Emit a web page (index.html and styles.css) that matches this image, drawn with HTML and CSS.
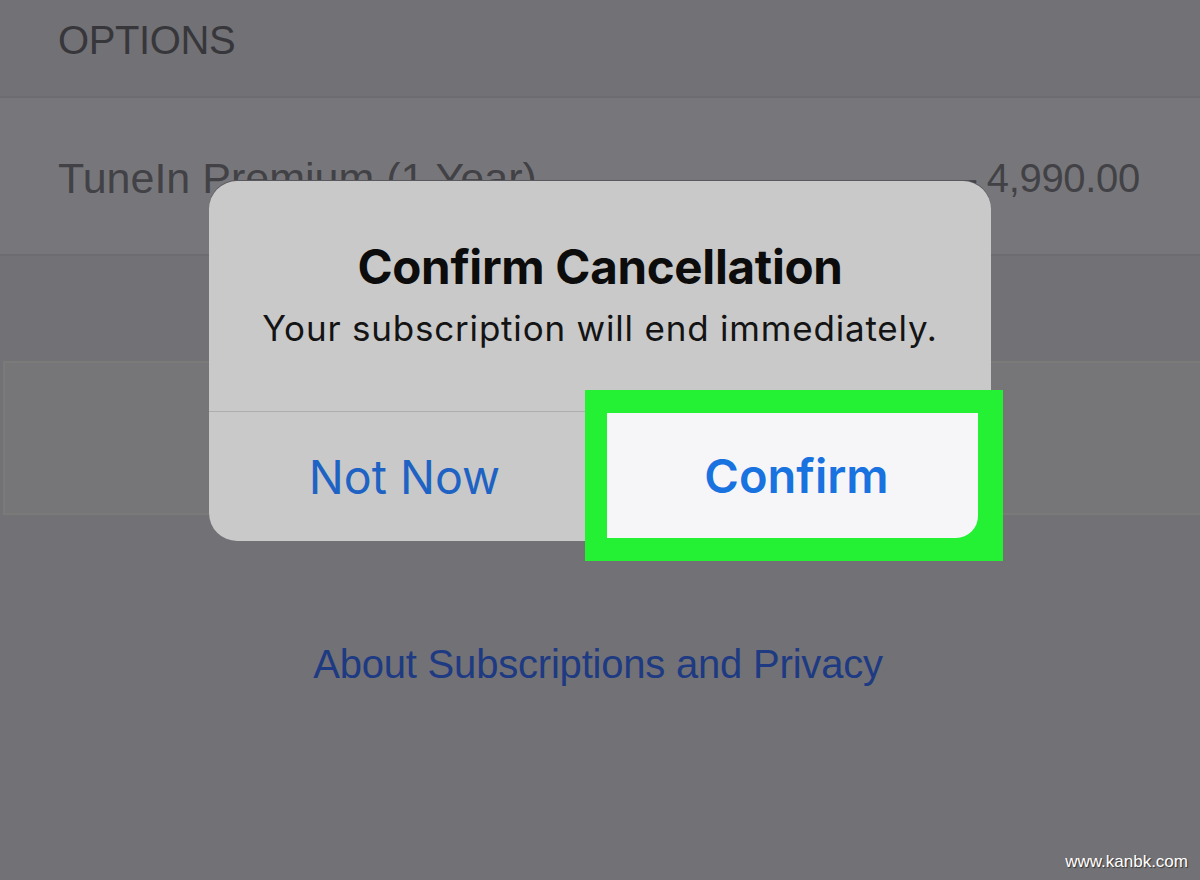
FILE: index.html
```html
<!DOCTYPE html>
<html>
<head>
<meta charset="utf-8">
<link rel="stylesheet" href="styles.css">
</head>
<body>
<div class="screen">
  <div class="section-header">OPTIONS</div>
  <div class="row">
    <span class="row-title">TuneIn Premium (1 Year)</span>
    <span class="row-price">– 4,990.00</span>
  </div>
  <div class="panel"></div>
  <div class="about">About Subscriptions and Privacy</div>

  <div class="alert">
    <div class="alert-body">
      <div class="alert-title">Confirm Cancellation</div>
      <div class="alert-msg">Your subscription will end immediately.</div>
    </div>
    <div class="alert-actions">
      <div class="alert-btn">Not Now</div>
      <div class="alert-btn alert-btn-right"></div>
    </div>
  </div>
  <div class="highlight"><span class="confirm">Confirm</span></div>

  <div class="watermark">www.kanbk.com</div>
</div>
</body>
</html>
```

FILE: styles.css
```css
html, body {
  margin: 0;
  padding: 0;
}
body {
  width: 1200px;
  height: 880px;
  overflow: hidden;
  background: #727176;
  font-family: "Liberation Sans", Arial, sans-serif;
}
.screen {
  position: relative;
  width: 1200px;
  height: 880px;
  display: flex;
  flex-direction: column;
}
.section-header {
  height: 96px;
  box-sizing: border-box;
  padding: 18px 0 0 58px;
  font-size: 40px;
  color: #37373b;
  letter-spacing: -0.4px;
}
.row {
  height: 160px;
  box-sizing: border-box;
  border-top: 2px solid #6d6d71;
  border-bottom: 2px solid #6d6d71;
  background: #77777b;
  display: flex;
  justify-content: space-between;
  align-items: center;
  padding: 4px 60px 0 58px;
  font-size: 43px;
  color: #424246;
}
.row-price {
  font-size: 40px;
  letter-spacing: -0.3px;
}
.panel {
  margin: 105px 0 0 3px;
  height: 154px;
  box-sizing: border-box;
  border: 2px solid #7a7a79;
  border-right: none;
  background: #767678;
}
.about {
  margin-top: 127px;
  text-align: center;
  font-size: 40px;
  color: #1d3a82;
  letter-spacing: -0.2px;
  padding-right: 4px;
}
.alert {
  position: absolute;
  left: 209px;
  top: 181px;
  width: 782px;
  height: 360px;
  border-radius: 28px;
  background: #c9c9c9;
  box-shadow: 0 -1px 0 #5a5a5e;
  display: flex;
  flex-direction: column;
  overflow: hidden;
  font-family: "Inter", "Roboto", sans-serif;
}
.alert-body {
  height: 231px;
  box-sizing: border-box;
  border-bottom: 1px solid #adadad;
  display: flex;
  flex-direction: column;
  align-items: center;
  padding-top: 57px;
}
.alert-title {
  font-size: 47.5px;
  font-weight: 700;
  color: #0c0c0c;
  letter-spacing: -0.3px;
}
.alert-msg {
  margin-top: 12px;
  font-size: 35px;
  color: #141414;
  letter-spacing: 0.8px;
}
.alert-actions {
  flex: 1;
  display: flex;
}
.alert-btn {
  flex: 1;
  display: flex;
  align-items: center;
  justify-content: center;
  font-size: 46.5px;
  color: #1e63c4;
  padding-right: 0;
}
.highlight {
  position: absolute;
  left: 585px;
  top: 390px;
  width: 418px;
  height: 171px;
  box-sizing: border-box;
  background: #24f034;
  display: flex;
  padding: 23px 25px 23px 22px;
}
.confirm {
  flex: 1;
  background: #f6f6f8;
  border-bottom-right-radius: 22px;
  display: flex;
  align-items: center;
  justify-content: center;
  font-family: "Inter", "Roboto", sans-serif;
  font-size: 47px;
  font-weight: 600;
  color: #1872e0;
  padding-left: 8px;
}
.watermark {
  position: absolute;
  right: 12px;
  bottom: 8px;
  font-size: 17px;
  color: #ffffff;
  text-shadow: 1px 1px 1px #333;
  font-family: "Liberation Sans", Arial, sans-serif;
}
```
